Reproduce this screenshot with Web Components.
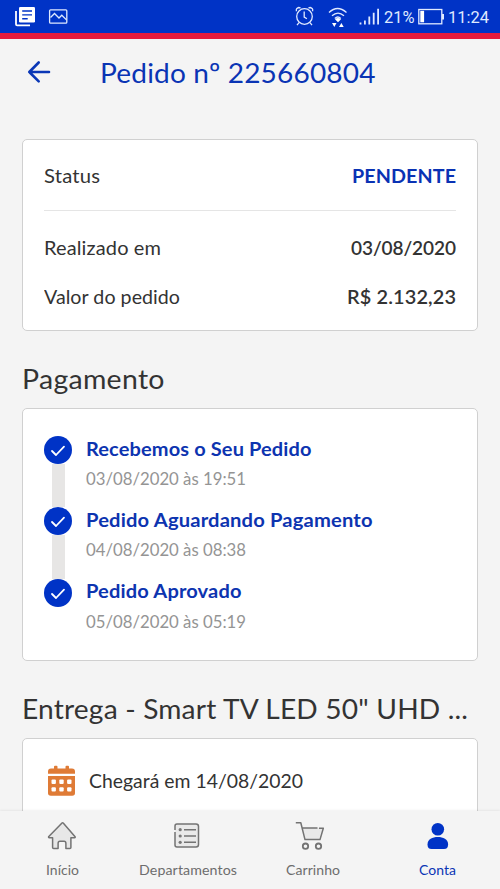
<!DOCTYPE html>
<html lang="pt-BR">
<head>
<meta charset="utf-8">
<title>Pedido</title>
<style>
html,body{margin:0;height:100%;overflow:hidden;background:#f4f4f4}
body{font-family:Lato,"Noto Sans",sans-serif;color:#333}
</style>
</head>
<body>
<order-app></order-app>
<script>
const define = (name, html, ready) => customElements.define(name, class extends HTMLElement {
  constructor() { super(); this.attachShadow({mode: 'open'}).innerHTML = html; }
  connectedCallback() { if (ready) ready(this, this.shadowRoot); }
});

/* A single line of text set to a given measure (attribute w), partly by glyph width and partly by tracking. */
define('ui-text', `<style>:host{display:inline-block;white-space:pre;flex:none}span{display:inline-block;transform-origin:0 50%}</style><span><slot></slot></span>`, (el, root) => {
  const s = root.querySelector('span'), w = parseFloat(el.getAttribute('w'));
  const n = el.textContent.length;
  const natural = s.getBoundingClientRect().width;
  const sx = 1 + (w / natural - 1) * 0.7;
  const ls = (w / sx - natural) / (n - 1);
  s.style.letterSpacing = ls.toFixed(3) + 'px';
  s.style.transform = 'scaleX(' + sx.toFixed(4) + ')';
  el.style.width = w + 'px';
});

define('status-bar', `<style>
:host{display:flex;align-items:center;background:#0033c6;border-bottom:6px solid #e61a3c;color:#dfe9ff;font:16.5px Roboto,sans-serif;box-sizing:border-box;height:39px;flex:none}
svg{display:block;width:500px;height:33px;flex:none;margin-right:-500px}
ui-text{line-height:33px;padding-top:1px}
.p{margin-left:384px}.t{margin-left:33.5px}
</style>
<svg viewBox="0 0 500 33" fill="none" stroke="#dfe9ff" stroke-width="1.3">
<path d="M16 11v13.2q0 1.1 1.1 1.1H30" stroke="#fff" stroke-width="1.8"/><rect x="19" y="7" width="16" height="15.6" rx="1.3" fill="#fff" stroke="none"/><path d="M22.2 11h9.8M22.2 14.9h9.8M22.2 18.7h5.5" stroke="#0033c6" stroke-width="1.4"/>
<rect x="49.6" y="9.8" width="17.2" height="13.4" rx="1"/><path d="M50.5 17.5l4-4 4.5 4.5 2.8-2.8 4.7 4.7"/>
<circle cx="304.5" cy="16.5" r="7.8"/><path d="M304.2 11.5v5.6l2.7 1.7M296.5 11.3q-1-3 2.3-3.8l1.8.3M312.5 11.3q1-3-2.3-3.8l-1.8.3M299 22.7l-2 2.5M310 22.7l2 2.5"/>
<path d="M329 12.5q8.500-8 17.500 0M332 15.800q6-5.400 12 0M334.800 18.400q3-2.800 6 0"/><path d="M335 19.200q3-2.200 6 0l-3 3zM332 23h4.500l-2.200 4zM339 27h4.700l-2.300-4z" fill="#fff" stroke="none"/>
<path d="M360.500 24.500v-2M364.900 24.500v-4M369.300 24.500v-8M373.700 24.500v-11.800M378.100 24.500v-15.700" stroke-width="1.800"/>
<rect x="418.800" y="9.500" width="23" height="14.300"/><path d="M443 14v5.500" stroke-width="2"/><path d="M420.300 10.800h3.800v11.500h-3.800z" fill="#fff" stroke="none"/>
</svg>
<ui-text class="p" w="30.5">21%</ui-text><ui-text class="t" w="41">11:24</ui-text>`);

define('page-header', `<style>
:host{display:flex;align-items:center;height:68px;margin-bottom:32px;padding-left:27px;color:#0a34b4;font-size:27.3px;line-height:68px;flex:none}
svg{width:24px;height:24px;margin:0 49px 2px 0;flex:none}
</style>
<svg viewBox="0 0 24 24" fill="none" stroke="#0a37b6" stroke-width="2.600" stroke-linecap="round" stroke-linejoin="round"><path d="M22 12H2.300M11.700 2.500L2.300 12l9.400 9.300"/></svg><slot></slot>`);

define('info-card', `<style>
:host{display:flex;flex-direction:column;box-sizing:border-box;margin:0 22.400px;background:#fff;border:1.400px solid #d0d0d0;border-radius:5px;padding:0 21px;flex:none}
</style><slot></slot>`);

define('info-row', `<style>
:host{display:flex;justify-content:space-between;align-items:center;height:49px;font-size:19.400px}
:host([main]){height:70px;border-bottom:1px solid #e5e5e5;margin-bottom:12px}
::slotted([slot=value]){font-weight:600}
:host([main]) ::slotted([slot=value]){color:#0a32b4;font-weight:700}
</style><slot></slot><slot name="value"></slot>`);

define('section-title', `<style>:host{display:block;height:58px;line-height:58px;padding:19px 0 0 22px;font-size:27.300px;flex:none}</style><slot></slot>`);

define('step-item', `<style>
:host{display:flex;gap:14px;height:71.400px}
:host([last]) i{display:none}
.rail{display:flex;flex-direction:column;align-items:center;width:28px}
svg{width:28px;height:28px;flex:none}
i{width:12.600px;flex:1;background:#e7e6e5}
.b{display:flex;flex-direction:column;align-items:flex-start}
.t{font-size:19.400px;line-height:24px;font-weight:700;color:#0d34b0;margin-top:.5px}
.d{font-size:16.800px;line-height:30px;color:#949494;margin-top:3.400px}
</style><div class="rail"><svg viewBox="0 0 28 28"><circle cx="14" cy="14" r="14" fill="#0033c6"/><path d="M8 15l4 4 8-8.300" fill="none" stroke="#fff" stroke-width="1.800" stroke-linecap="round" stroke-linejoin="round"/></svg><i></i></div>
<div class="b"><div class="t"><slot></slot></div><div class="d"><slot name="date"></slot></div></div>`);

define('delivery-row', `<style>:host{display:flex;align-items:center;height:82px;font-size:19.400px;padding-left:3px}
svg{width:28px;height:31px;margin:0 13px 0 .6px}</style>
<svg viewBox="0 0 28 31"><g fill="#df7b36"><path d="M0 8.800V6.500Q0 3.400 3 3.400h3V1.700Q6 .8 7 .8h1.500q1 0 1 .9v1.700h8V1.700q0-.9 1-.9H20q1 0 1 .9v1.700h3q3 0 3 3.100v2.300z"/><path d="M0 11h27v17q0 2.800-2.800 2.800H2.800Q0 30.800 0 28z"/></g><g fill="#fff"><rect x="3.500" y="14.500" width="4.400" height="4.400" rx="1"/><rect x="11.300" y="14.500" width="4.400" height="4.400" rx="1"/><rect x="19.100" y="14.500" width="4.400" height="4.400" rx="1"/><rect x="3.500" y="22.200" width="4.400" height="4.400" rx="1"/><rect x="11.300" y="22.200" width="4.400" height="4.400" rx="1"/><rect x="19.100" y="22.200" width="4.400" height="4.400" rx="1"/></g></svg><slot></slot>`);

const icons = {
  home: '<path d="M15 2L1.800 15.500q-.7 1.200.6 1.300h3.200v9.600q0 1 1 1h4.500v-4.900q0-2.200 1.800-2.200h4.200q1.800 0 1.800 2.200v4.900h4q1 0 1-1v-9.600h3.500q1.300-.1.500-1.300L16.200 2q-.6-.6-1.200 0z" fill="#e7e7e7"/>',
  list: '<path d="M3 9V5q0-2 2-2h19q2.500 0 2.500 2.500v18q0 2.500-2.500 2.500H5q-2 0-2-2V11" fill="#e9e9e9"/><path d="M12 8.700h12M12 15h12M12 21.300h12"/><g fill="#777" stroke="none"><circle cx="8.200" cy="8.700" r="1.600"/><circle cx="8.200" cy="15" r="1.600"/><circle cx="8.200" cy="21.300" r="1.600"/></g>',
  cart: '<path d="M5.500 7h20l-3.500 11.500H8.300z" fill="#e9e9e9" stroke="none"/><path d="M-1.200 1.800h5L8 18.600h15L26.300 7.200H22M5.500 7h15"/><g stroke-width="1.800"><circle cx="8.500" cy="25.200" r="2.700"/><circle cx="21.500" cy="25.200" r="2.700"/></g>',
  user: '<g fill="#0033c6" stroke="none"><circle cx="15.800" cy="8.300" r="6.300"/><path d="M5.500 23.500C5.500 18 10.500 16 15.800 16S26.100 18 26.100 23.500Q26.100 28 22 28h-12.500Q5.500 28 5.500 23.500z"/></g>'
};
define('nav-item', `<style>
:host{display:flex;flex-direction:column;align-items:center;flex:1;color:#6d6d6d;font-size:13.800px;padding-top:10.400px}
:host([active]){color:#0a34b4}
svg{width:30px;height:30px;overflow:visible;margin-right:1px}
div{line-height:20px;margin-top:9px}
</style><svg viewBox="0 0 30 30" fill="none" stroke="#737373" stroke-width="1.500" stroke-linejoin="round"></svg><div><slot></slot></div>`,
  (el, root) => { root.querySelector('svg').innerHTML = icons[el.getAttribute('icon')]; });

define('bottom-nav', `<style>:host{display:flex;height:78px;background:#f4f4f4;box-shadow:0 -1px 2px #0000000f;flex:none;position:relative}</style><slot></slot>`);

define('order-app', `<style>
:host{display:flex;flex-direction:column;width:500px;height:889px}
main{flex:1;min-height:0;overflow:hidden;display:flex;flex-direction:column}
.pay{height:253px;padding-top:27px}
.sum{height:192px}
</style>
<status-bar></status-bar>
<main>
<page-header><ui-text w="275.500">Pedido nº 225660804</ui-text></page-header>
<info-card class="sum">
<info-row main><ui-text w="56">Status</ui-text><ui-text slot="value" w="104">PENDENTE</ui-text></info-row>
<info-row><ui-text w="117">Realizado em</ui-text><ui-text slot="value" w="105">03/08/2020</ui-text></info-row>
<info-row><ui-text w="136">Valor do pedido</ui-text><ui-text slot="value" w="109">R$ 2.132,23</ui-text></info-row>
</info-card>
<section-title><ui-text w="142.500">Pagamento</ui-text></section-title>
<info-card class="pay">
<step-item><ui-text w="225.500">Recebemos o Seu Pedido</ui-text><ui-text slot="date" w="160">03/08/2020 às 19:51</ui-text></step-item>
<step-item><ui-text w="286.500">Pedido Aguardando Pagamento</ui-text><ui-text slot="date" w="160">04/08/2020 às 08:38</ui-text></step-item>
<step-item last><ui-text w="155.500">Pedido Aprovado</ui-text><ui-text slot="date" w="160">05/08/2020 às 05:19</ui-text></step-item>
</info-card>
<section-title><ui-text w="446">Entrega - Smart TV LED 50" UHD ...</ui-text></section-title>
<info-card><delivery-row><ui-text w="214">Chegará em 14/08/2020</ui-text></delivery-row></info-card>
</main>
<bottom-nav>
<nav-item icon="home"><ui-text w="33">Início</ui-text></nav-item>
<nav-item icon="list"><ui-text w="98">Departamentos</ui-text></nav-item>
<nav-item icon="cart"><ui-text w="54">Carrinho</ui-text></nav-item>
<nav-item icon="user" active><ui-text w="37">Conta</ui-text></nav-item>
</bottom-nav>`);
</script>
</body>
</html>
